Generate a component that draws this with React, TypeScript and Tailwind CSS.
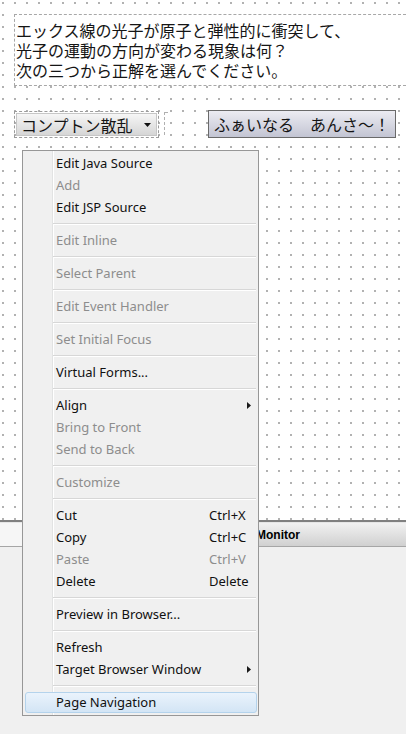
import React from "react";

type Item =
  | { kind: "sep" }
  | {
      kind: "item";
      label: string;
      disabled?: boolean;
      shortcut?: string;
      sub?: boolean;
      hot?: boolean;
    };

const items: Item[] = [
  { kind: "item", label: "Edit Java Source" },
  { kind: "item", label: "Add", disabled: true },
  { kind: "item", label: "Edit JSP Source" },
  { kind: "sep" },
  { kind: "item", label: "Edit Inline", disabled: true },
  { kind: "sep" },
  { kind: "item", label: "Select Parent", disabled: true },
  { kind: "sep" },
  { kind: "item", label: "Edit Event Handler", disabled: true },
  { kind: "sep" },
  { kind: "item", label: "Set Initial Focus", disabled: true },
  { kind: "sep" },
  { kind: "item", label: "Virtual Forms..." },
  { kind: "sep" },
  { kind: "item", label: "Align", sub: true },
  { kind: "item", label: "Bring to Front", disabled: true },
  { kind: "item", label: "Send to Back", disabled: true },
  { kind: "sep" },
  { kind: "item", label: "Customize", disabled: true },
  { kind: "sep" },
  { kind: "item", label: "Cut", shortcut: "Ctrl+X" },
  { kind: "item", label: "Copy", shortcut: "Ctrl+C" },
  { kind: "item", label: "Paste", shortcut: "Ctrl+V", disabled: true },
  { kind: "item", label: "Delete", shortcut: "Delete" },
  { kind: "sep" },
  { kind: "item", label: "Preview in Browser..." },
  { kind: "sep" },
  { kind: "item", label: "Refresh" },
  { kind: "item", label: "Target Browser Window", sub: true },
  { kind: "sep" },
  { kind: "item", label: "Page Navigation", hot: true },
];

function SubArrow() {
  return (
    <svg width="4" height="7" viewBox="0 0 4 7" className="absolute right-[7px] top-[8px]">
      <polygon points="0,0 4,3.5 0,7" fill="#1a1a1a" />
    </svg>
  );
}

function ContextMenu() {
  return (
    <div className="absolute left-[22px] top-[150px] w-[237px] border border-[#979797] bg-[#f0f0f0] pt-[1px] pb-[2px] font-['Noto_Sans',sans-serif] text-[13px]">
      <div className="absolute left-[29px] top-0 bottom-0 w-[2px] border-l border-[#e2e3e3] border-r border-r-white" />
      {items.map((it, i) =>
        it.kind === "sep" ? (
          <div key={i} className="relative h-[11px] ml-[30px] mr-[2px] flex flex-col justify-center">
            <div className="h-px bg-[#d7d7d7]" />
            <div className="h-px bg-white" />
          </div>
        ) : (
          <div key={i} className="relative h-[22px] flex items-center pl-[33px]">
            {it.hot && (
              <div className="absolute top-[1px] bottom-0 left-[2px] right-[1px] rounded-[3px] border border-[#b4d3ec] bg-gradient-to-b from-[#eaf3fc] to-[#d3e5f5]" />
            )}
            <span
              className={
                "relative w-[153px] shrink-0 leading-[22px] whitespace-nowrap " +
                (it.disabled ? "text-[#8d8d8d]" : "text-[#111]")
              }
            >
              {it.label}
            </span>
            {it.shortcut && (
              <span
                className={
                  "relative leading-[22px] whitespace-nowrap " +
                  (it.disabled ? "text-[#8d8d8d]" : "text-[#111]")
                }
              >
                {it.shortcut}
              </span>
            )}
            {it.sub && <SubArrow />}
          </div>
        )
      )}
    </div>
  );
}

export default function App() {
  return (
    <div className="relative w-[406px] h-[734px] overflow-hidden bg-[#f0f0f0]">
      <div className="h-[520px] bg-white bg-[radial-gradient(circle_at_3px_3px,#b0b0b0_0.7px,transparent_1.1px)] bg-[length:12px_12px] pt-[14px] pl-[14px]">
        <div className="border border-r-0 border-dashed border-[#a8a8a8] bg-white pl-[1px] pt-[5px] pb-[5px] font-['Noto_Sans_CJK_JP',sans-serif] text-[16px] leading-[20px] text-[#151515]">
          <p className="h-[20px]">エックス線の光子が原子と弾性的に衝突して、</p>
          <p className="h-[20px]">光子の運動の方向が変わる現象は何？</p>
          <p className="h-[20px]">次の三つから正解を選んでください。</p>
        </div>
        <div className="mt-[25px] flex items-start font-['Noto_Sans_CJK_JP',sans-serif] text-[16px] text-[#151515]">
          <div className="w-[145px] h-[27px] border border-dashed border-[#9c9c9c] p-px">
            <div className="h-full flex items-center justify-between border border-[#c6c6c6] bg-gradient-to-b from-[#f6f6f6] to-[#d6d6d6] pl-[4px] pr-[5px]">
              <span className="leading-[20px]">コンプトン散乱</span>
              <svg width="7" height="4" viewBox="0 0 7 4">
                <polygon points="0,0 7,0 3.5,4" fill="#111" />
              </svg>
            </div>
          </div>
          <div className="ml-[5px] mt-[1px] w-[4px] h-[23px] border-l border-t border-dashed border-[#b0b0b0] bg-white" />
          <div className="ml-[40px] -mt-[1px] w-[188px] h-[28px] flex items-center border border-[#6a6a6a] bg-gradient-to-b from-[#ececf2] to-[#c3c5d3] pl-[5px]">
            <span className="leading-[20px] whitespace-nowrap">ふぁいなる　あんさ～！</span>
          </div>
        </div>
      </div>
      <div className="h-[2px] bg-[#808080]" />
      <div className="h-[25px] flex border-b border-[#a6a6a6]">
        <div className="w-[22px] bg-[#f6f6f6] border-t border-[#e6e6e6]" />
        <div className="flex-1 flex items-center pl-[234px] bg-gradient-to-b from-[#f2f2f2] to-[#d0d0d0] border-t border-[#e6e6e6] font-['Liberation_Sans',Arial,sans-serif] font-bold text-[12px] text-black">
          Monitor
        </div>
      </div>
      <ContextMenu />
    </div>
  );
}
